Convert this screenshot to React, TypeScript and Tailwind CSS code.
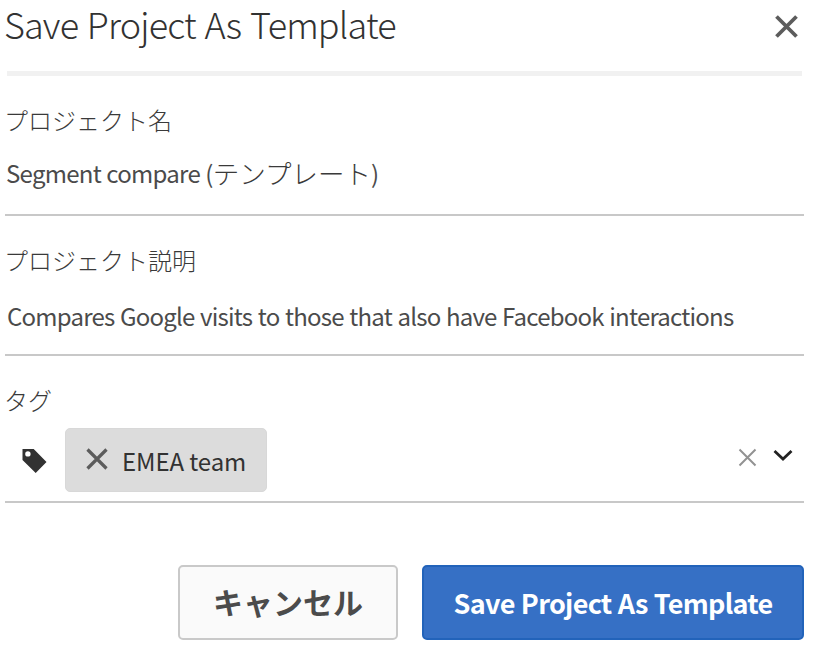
import React from "react";

function Cross({ size, width, color }: { size: number; width: number; color: string }) {
  return (
    <svg width={size} height={size} viewBox={`0 0 ${size} ${size}`} fill="none" stroke={color} strokeWidth={width} className="block shrink-0">
      <path d={`M1.5 1.5L${size - 1.5} ${size - 1.5}M${size - 1.5} 1.5L1.5 ${size - 1.5}`} />
    </svg>
  );
}

function Label({ children }: { children: React.ReactNode }) {
  return <div className="-ml-px h-[36px] text-[24px] font-light leading-[36px] whitespace-nowrap text-[#3a3a3a]">{children}</div>;
}

export default function App() {
  return (
    <div className="flex h-[654px] w-[820px] flex-col bg-white pl-[5px] pr-[16px] font-['Noto_Sans_CJK_JP',sans-serif] text-[#4b4b4b]">
      <header className="mx-[2px] flex h-[76px] shrink-0 justify-between border-b-[5px] border-[#f1f1f1]">
        <h1 className="-ml-[3px] h-[46px] text-[36px] font-light leading-[46px] tracking-[-0.85px] [word-spacing:1.6px] whitespace-nowrap text-[#323232]">Save Project As Template</h1>
        <button className="mt-[15px] mr-[4px] h-[23px]" aria-label="Close"><Cross size={23} width={3.8} color="#5c5c5c" /></button>
      </header>

      <section className="flex h-[140px] shrink-0 flex-col border-b-2 border-[#c8c8c8] pt-[26px]">
        <Label>プロジェクト名</Label>
        <div className="mt-[17px] flex h-[36px] pl-px text-[24px] leading-[36px] whitespace-nowrap">
          <span className="tracking-[-0.73px] [word-spacing:0.7px]">Segment compare (</span>
          <span className="text-[26.5px] font-light text-[#3a3a3a]">テンプレート</span>
          <span>)</span>
        </div>
      </section>

      <section className="flex h-[140px] shrink-0 flex-col border-b-2 border-[#c8c8c8] pt-[26px]">
        <Label>プロジェクト説明</Label>
        <div className="mt-[20px] flex h-[36px] pl-[2px] text-[24px] leading-[36px] tracking-[-0.78px] [word-spacing:0.9px] whitespace-nowrap">
          <span>Compares Google visits to those that also have Facebook interactions</span>
        </div>
      </section>

      <section className="flex h-[147px] shrink-0 flex-col border-b-2 border-[#c8c8c8] pt-[26px]">
        <Label>タグ</Label>
        <div className="mt-[10px] flex h-[64px]">
          <svg width="26" height="26" viewBox="0 0 26 26" className="mt-[20px] ml-[17px] shrink-0">
            <path fillRule="evenodd" fill="#323232" d="M0.5 1H11.7L24.5 13.9L13.7 24.9L0.5 12.1ZM5.9 3.2A2.7 2.7 0 1 0 5.9 8.6A2.7 2.7 0 1 0 5.9 3.2Z" />
          </svg>
          <div className="ml-[17px] flex h-[64px] w-[202px] items-center rounded-[5px] border border-[#d8d8d8] bg-[#dcdcdc] pl-[20px] text-[#323232]">
            <div className="pb-[2px]"><Cross size={22} width={3.2} color="#5c5c5c" /></div>
            <span className="ml-[14px] pt-px text-[24px] leading-[36px] tracking-[-0.1px] whitespace-nowrap">EMEA team</span>
          </div>
          <div className="ml-auto flex h-[58px] items-center gap-[16px] pr-[11px]">
            <Cross size={19} width={2} color="#929292" />
            <svg width="20" height="14" viewBox="0 0 20 14" fill="none" stroke="#222" strokeWidth="2.8" className="-mt-[4px]">
              <path d="M1.5 3L10 11L18.5 3" />
            </svg>
          </div>
        </div>
      </section>

      <footer className="mt-[62px] flex h-[75px] shrink-0 justify-end gap-[24px]">
        <button className="flex h-[75px] w-[220px] items-center justify-center rounded-[5px] border-2 border-[#c9c9c9] bg-[#fafafa] pb-[4px] text-[30px] font-bold leading-[40px] whitespace-nowrap"><span>キャンセル</span></button>
        <button className="flex h-[75px] w-[382px] items-center justify-center rounded-[5px] border-2 border-[#2263ba] bg-[#3670c5] text-[27px] font-bold leading-[40px] tracking-[-0.7px] [word-spacing:0.8px] whitespace-nowrap text-white"><span>Save Project As Template</span></button>
      </footer>
    </div>
  );
}
